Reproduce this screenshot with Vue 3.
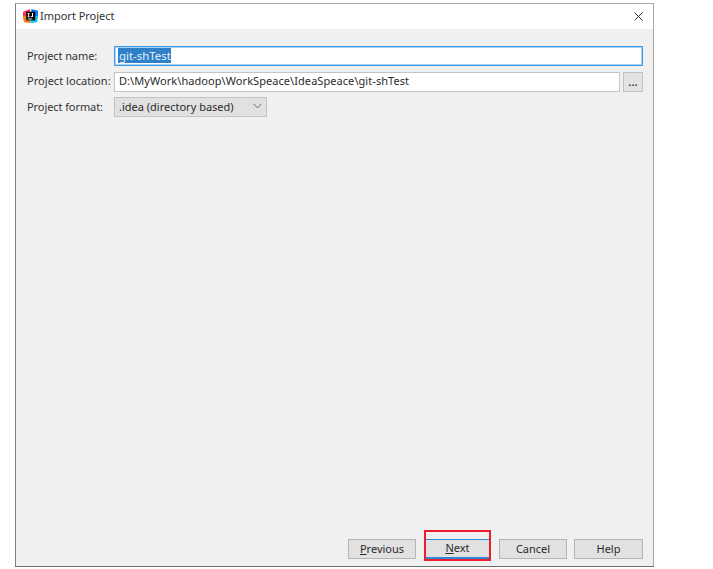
<script setup>
const buttons = [
  { key: 'P', rest: 'revious', cls: 'prev' },
  { key: 'N', rest: 'ext', cls: 'next' },
  { key: '', rest: 'Cancel', cls: 'cancel' },
  { key: '', rest: 'Help', cls: 'help' }
]
</script>

<template>
  <div class="page">
    <div class="window">
      <header class="titlebar">
        <svg class="logo" width="15" height="14" viewBox="0 0 16 16" preserveAspectRatio="none" aria-hidden="true">
          <path d="M0 3 L8 0 L6 8 L0 10 Z" fill="#fe315d" />
          <path d="M9 0 L16 2 L16 9 L9 8 Z" fill="#087cfa" />
          <path d="M0 8 L6 8 L8 16 L1 15 Z" fill="#f97a12" />
          <path d="M8 8 L16 8 L15 15 L8 16 Z" fill="#07c3f2" />
          <rect x="3.5" y="3" width="9.5" height="10" fill="#000" />
          <rect x="5" y="10.9" width="5" height="1" fill="#fff" />
          <rect x="5" y="4.6" width="2" height="1" fill="#fff" />
          <rect x="5.5" y="4.6" width="1" height="4.6" fill="#fff" />
          <rect x="5" y="8.4" width="2" height="1" fill="#fff" />
          <rect x="9.6" y="4.6" width="1.1" height="4.2" fill="#fff" />
          <rect x="8.2" y="8.2" width="2.4" height="1" fill="#fff" />
        </svg>
        <span class="title">Import Project</span>
        <svg class="close" width="9" height="9" viewBox="0 0 10 10" aria-hidden="true">
          <path d="M0.5 0.5 L9.5 9.5 M9.5 0.5 L0.5 9.5" stroke="#333" stroke-width="1.1" fill="none" />
        </svg>
      </header>

      <main class="content">
        <form class="form" @submit.prevent>
          <label class="label">Project name:</label>
          <div class="field focused"><span class="selected">git-shTest</span></div>

          <label class="label wide">Project location:</label>
          <div class="location">
            <div class="field path">D:\MyWork\hadoop\WorkSpeace\IdeaSpeace\git-shTest</div>
            <button type="button" class="browse"><span>...</span></button>
          </div>

          <label class="label">Project format:</label>
          <div class="select">
            <span>.idea (directory based)</span>
            <svg width="9" height="6" viewBox="0 0 9 6" aria-hidden="true">
              <path d="M0.5 0.8 L4.5 4.8 L8.5 0.8" stroke="#666" stroke-width="1" fill="none" />
            </svg>
          </div>
        </form>

        <footer class="footer">
          <button v-for="b in buttons" :key="b.rest" type="button" class="btn" :class="b.cls">
            <u v-if="b.key">{{ b.key }}</u>{{ b.rest }}
            <span v-if="b.cls === 'next'" class="redbox"></span>
          </button>
        </footer>
      </main>
    </div>
  </div>
</template>

<style>
html, body { margin: 0; background: #fff; }
</style>

<style scoped>
.page {
  width: 713px;
  height: 569px;
  box-sizing: border-box;
  padding: 3px 0 0 15px;
  background: #fff;
  font-family: "Noto Sans", "Open Sans", sans-serif;
  font-size: 11px;
  color: #2b2b2b;
  overflow: hidden;
}
.window {
  width: 639px;
  height: 564px;
  box-sizing: border-box;
  border: 1px solid #a8a8a8;
  border-bottom-color: #6e6e6e;
  border-left-color: #7e7e7e;
  display: flex;
  flex-direction: column;
}
.titlebar {
  height: 25px;
  flex: none;
  box-sizing: border-box;
  background: #fff;
  display: flex;
  align-items: center;
  padding: 0 10px 2px 7px;
}
.logo { flex: none; margin-right: 2px; }
.title { flex: 1; color: #333; letter-spacing: -0.02px; }
.close { flex: none; margin-top: 2px; }
.content {
  flex: 1;
  background: #f0f0f0;
  display: flex;
  flex-direction: column;
  padding: 17px 10px 7px 11px;
  min-height: 0;
}
.form {
  display: grid;
  grid-template-columns: 87px 1fr;
  grid-auto-rows: 20px;
  row-gap: 5.5px;
  align-items: center;
}
.label { color: #333; letter-spacing: -0.08px; padding-bottom: 2px; }
.wide { letter-spacing: 0.04px; }
.field {
  height: 20px;
  box-sizing: border-box;
  flex: 1;
  background: #fff;
  border: 1px solid #c4c4c4;
  padding: 0 4px 0;
  display: flex;
  align-items: center;
  color: #2b2b2b;
}
.path { letter-spacing: 0.06px; padding-bottom: 2px; }
.focused {
  border: 1px solid #3d9be6;
  box-shadow: inset 0 0 0 1px #a9d4f5;
  padding: 0 3px 1px;
}
.selected {
  background: #2f7fc9;
  color: #e8f1f9;
  font-size: 11.4px;
  line-height: 15px;
  padding: 0 0 0 1px;
}
.location { display: flex; gap: 3px; }
.browse {
  width: 20px;
  height: 20px;
  padding: 0;
  border: 1px solid #c0c0c0;
  background: #e3e3e3;
  font: inherit;
  font-weight: 700;
  color: #445;
  line-height: 14px;
}
.select {
  width: 153px;
  height: 20px;
  box-sizing: border-box;
  background: #e1e1e1;
  border: 1px solid #c4c4c4;
  display: flex;
  align-items: center;
  justify-content: space-between;
  padding: 0 4px 2px;
}
.footer {
  margin-top: auto;
  display: flex;
  justify-content: flex-end;
  gap: 8px;
}
.btn {
  position: relative;
  height: 20px;
  width: 68px;
  box-sizing: border-box;
  padding: 0 0 2px;
  background: #e1e1e1;
  border: 1px solid #b4b4b4;
  font: inherit;
  color: #2b2b2b;
  line-height: 15px;
}
.next {
  width: 67px;
  border: 1px solid #2f8ad6;
  border-width: 1px 1px 2px;
}
.help { width: 69px; margin-left: -1px; }
.redbox {
  position: absolute;
  left: -1px;
  right: -1px;
  top: -10px;
  bottom: -4px;
  border: 2px solid #ed1c2e;
}
</style>
